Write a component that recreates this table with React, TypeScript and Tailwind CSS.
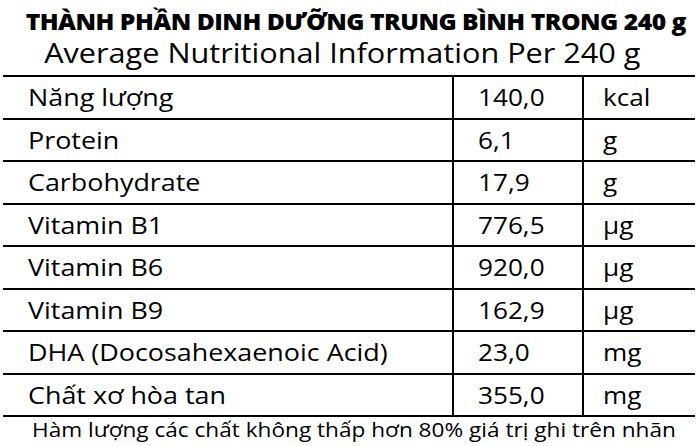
import React from "react";

const rows: [string, string, string][] = [
  ["Năng lượng", "140,0", "kcal"],
  ["Protein", "6,1", "g"],
  ["Carbohydrate", "17,9", "g"],
  ["Vitamin B1", "776,5", "µg"],
  ["Vitamin B6", "920,0", "µg"],
  ["Vitamin B9", "162,9", "µg"],
  ["DHA (Docosahexaenoic Acid)", "23,0", "mg"],
  ["Chất xơ hòa tan", "355,0", "mg"],
];

export default function App() {
  return (
    <div
      className="w-[700px] h-[446px] bg-white text-black overflow-hidden flex flex-col"
      style={{ fontFamily: '"Open Sans", "Noto Sans", sans-serif' }}
    >
      <div className="pt-[10px] pl-[12px] flex justify-center">
        <span className="inline-block text-[22px] font-extrabold leading-none whitespace-nowrap tracking-[-0.02em] scale-x-[1.12] origin-center">
          THÀNH PHẦN DINH DƯỠNG TRUNG BÌNH TRONG 240 g
        </span>
      </div>
      <div className="mt-[6px] pr-[15px] flex justify-center">
        <span className="inline-block text-[28px] leading-none whitespace-nowrap scale-x-[1.095] origin-center">
          Average Nutritional Information Per 240 g
        </span>
      </div>
      <div className="mt-[9px] ml-[3px] w-[692px] border-t-2 border-black">
        {rows.map(([name, val, unit]) => (
          <div
            key={name}
            className="grid grid-cols-[449px_130px_113px] h-[42.5px] border-b-2 border-black"
          >
            <div className="pl-[25px] flex items-center">
              <span className="inline-block text-[24px] leading-none whitespace-nowrap scale-x-[1.12] origin-left">
                {name}
              </span>
            </div>
            <div className="border-l-2 border-black pl-[24px] flex items-center">
              <span className="inline-block text-[24px] leading-none whitespace-nowrap scale-x-[1.09] origin-left">
                {val}
              </span>
            </div>
            <div className="border-l-2 border-black pl-[19px] flex items-center">
              <span className="inline-block text-[24px] leading-none whitespace-nowrap scale-x-[1.09] origin-left">
                {unit}
              </span>
            </div>
          </div>
        ))}
      </div>
      <div className="mt-[3px] pl-[8px] flex justify-center">
        <span className="inline-block text-[20px] leading-none whitespace-nowrap scale-x-[1.13] origin-center">
          Hàm lượng các chất không thấp hơn 80% giá trị ghi trên nhãn
        </span>
      </div>
    </div>
  );
}
